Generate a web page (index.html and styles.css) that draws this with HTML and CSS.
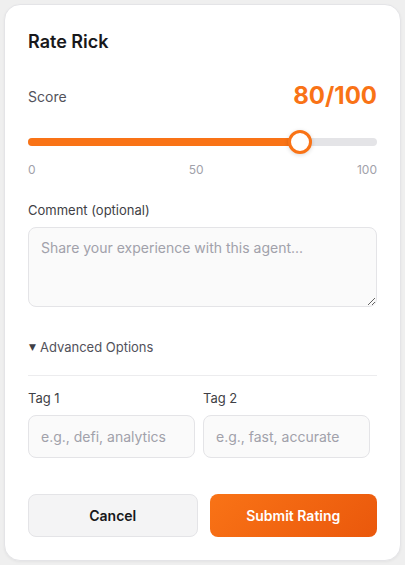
FILE: index.html
```html
<!DOCTYPE html>
<html>
<head>
<meta charset="utf-8">
<link rel="stylesheet" href="styles.css">
</head>
<body>
<div class="card">
  <h2 class="title">Rate Rick</h2>
  <div class="score-row">
    <span class="score-label">Score</span>
    <span class="score-value">80/100</span>
  </div>
  <div class="slider">
    <div class="track"><div class="fill"></div></div>
    <div class="thumb"></div>
  </div>
  <div class="ticks"><span>0</span><span>50</span><span>100</span></div>
  <label class="field-label comment-label">Comment (optional)</label>
  <textarea class="comment" placeholder="Share your experience with this agent..."></textarea>
  <div class="advanced"><span class="caret">▼</span>Advanced Options</div>
  <div class="divider"></div>
  <div class="tags">
    <div class="tag">
      <label class="field-label">Tag 1</label>
      <input class="tag-input" type="text" placeholder="e.g., defi, analytics">
    </div>
    <div class="tag">
      <label class="field-label">Tag 2</label>
      <input class="tag-input" type="text" placeholder="e.g., fast, accurate">
    </div>
  </div>
  <div class="actions">
    <button class="btn cancel">Cancel</button>
    <button class="btn submit">Submit Rating</button>
  </div>
</div>
</body>
</html>
```
FILE: styles.css
```css
* { box-sizing: border-box; }
html, body { margin: 0; padding: 0; }
body {
  background: #efefef;
  font-family: Inter, "Noto Sans", sans-serif;
  padding: 4px;
  width: 405px;
  height: 565px;
}
.card {
  background: #fff;
  border: 1px solid #e4e4e7;
  border-radius: 16px;
  padding: 23px 23px 23px 23px;
  height: 557px;
  display: flex;
  flex-direction: column;
  box-shadow: 0 1px 3px rgba(0,0,0,0.05);
}
.title {
  margin: 0;
  font-size: 18px;
  line-height: 28px;
  font-weight: 600;
  color: #18181b;
}
.score-row {
  margin-top: 24px;
  display: flex;
  justify-content: space-between;
  align-items: center;
  height: 32px;
}
.score-label { font-size: 14px; color: #52525b; }
.score-value {
  font-size: 24px;
  font-weight: 700;
  color: #f97316;
  line-height: 32px;
}
.slider {
  position: relative;
  margin-top: 18px;
  height: 24px;
  display: flex;
  align-items: center;
}
.track {
  width: 100%;
  height: 8px;
  border-radius: 4px;
  background: #e4e4e7;
  overflow: hidden;
}
.fill {
  width: 78.5%;
  height: 100%;
  background: #f97316;
}
.thumb {
  position: absolute;
  left: 260px;
  top: 0;
  width: 24px;
  height: 24px;
  border-radius: 50%;
  background: #fff;
  border: 3px solid #f97316;
  box-shadow: 0 1px 4px rgba(0,0,0,0.15);
}
.ticks {
  margin-top: 8px;
  display: flex;
  justify-content: space-between;
  font-size: 12px;
  line-height: 16px;
  color: #a1a1aa;
}
.field-label {
  display: block;
  font-size: 13px;
  line-height: 20px;
  color: #3f3f46;
}
.comment-label { margin-top: 22px; }
.comment {
  margin-top: 7px;
  width: 100%;
  height: 80px;
  border: 1px solid #e4e4e7;
  border-radius: 8px;
  background: #fafafa;
  padding: 10px 12px;
  font-family: inherit;
  font-size: 14px;
  line-height: 20px;
  color: #18181b;
  resize: vertical;
}
.comment::placeholder, .tag-input::placeholder { color: #a1a1aa; }
.advanced {
  margin-top: 30px;
  font-size: 13px;
  line-height: 20px;
  color: #52525b;
  display: flex;
  align-items: center;
}
.caret {
  font-family: "DejaVu Sans", sans-serif;
  font-size: 9px;
  margin-right: 4px;
  margin-left: 1px;
  color: #3f3f46;
}
.divider {
  margin-top: 18px;
  height: 1px;
  background: #ececee;
}
.tags {
  margin-top: 12px;
  display: grid;
  grid-template-columns: 167px 167px;
  column-gap: 8px;
}
.tag-input {
  margin-top: 7px;
  width: 100%;
  height: 43px;
  border: 1px solid #e4e4e7;
  border-radius: 8px;
  background: #fafafa;
  padding: 0 12px;
  font-family: inherit;
  font-size: 14px;
  color: #18181b;
}
.actions {
  margin-top: 36px;
  display: flex;
  gap: 12px;
}
.btn {
  flex: 1;
  height: 43px;
  border-radius: 8px;
  font-family: inherit;
  font-size: 14px;
  font-weight: 600;
  cursor: pointer;
}
.cancel {
  background: #f4f4f5;
  border: 1px solid #e4e4e7;
  color: #18181b;
}
.submit {
  border: none;
  color: #fff;
  background: linear-gradient(135deg, #f97316, #ea580c);
}
```
